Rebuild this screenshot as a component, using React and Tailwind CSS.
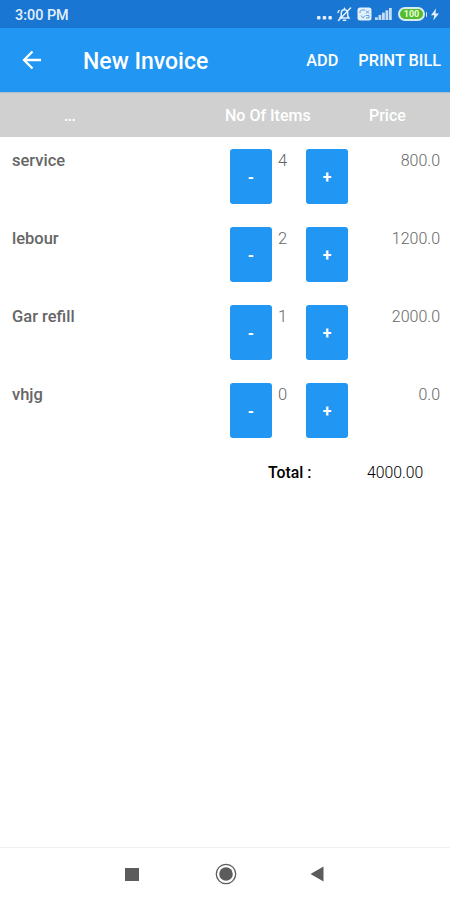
import React, { useState } from 'react';

const initialItems = [
  { id: 1, name: 'service', qty: 4, rate: 200 },
  { id: 2, name: 'lebour', qty: 2, rate: 600 },
  { id: 3, name: 'Gar refill', qty: 1, rate: 2000 },
  { id: 4, name: 'vhjg', qty: 0, rate: 100 },
];

const StatusBar = () => (
  <div className="flex h-7 items-center justify-between bg-[#1976d2] pl-[15px] pr-[11px] text-[#e3f0fc]">
    <span className="pt-[4px] text-[14.400px] leading-4 font-medium">3:00 PM</span>
    <div className="flex items-center">
      <svg className="mr-[5px] h-[14px] w-[15px]" viewBox="0 0 15 14" fill="currentColor">
        <rect x="0" y="9" width="3.500" height="3.500" rx="1" />
        <rect x="5.700" y="9" width="3.500" height="3.500" rx="1" />
        <rect x="11.400" y="9" width="3.500" height="3.500" rx="1" />
      </svg>
      {/* Muted bell */}
      <svg className="mr-[5px] h-[15px] w-[15px]" viewBox="0 0 15 15" fill="none" stroke="currentColor" strokeWidth="1.500" strokeLinecap="round">
        <path d="M3 11h9l-1.300-2V6.200C10.700 4 9.300 2.800 7.500 2.800S4.300 4 4.300 6.200V9L3 11z" />
        <path d="M6.300 13.200h2.400M7.500 1.300v1M13.500 1L1.500 13.500M1 5.500l1-2" />
      </svg>
      {/* VoLTE badge */}
      <svg className="mr-[3px] h-[14px] w-[15px]" viewBox="0 0 15 14">
        <rect x="0.500" y="0.500" width="14" height="13" rx="2.500" fill="currentColor" />
        <path d="M3 6V5c0-1.500 1-2 2.500-2H8M9 3.500l3 3M12 3.500l-3 3M4 8.500l2 2.500 2-2.500M9 8.500h3v2.500H9" fill="none" stroke="#5d9fe0" strokeWidth="1" />
      </svg>
      <svg className="mr-[6px] h-[12px] w-[17px]" viewBox="0 0 17 13" preserveAspectRatio="none" fill="currentColor">
        <rect x="0" y="10" width="2.800" height="3" opacity="0.850" />
        <rect x="3.500" y="7.500" width="2.800" height="5.500" opacity="0.850" />
        <rect x="7" y="5" width="2.800" height="8" opacity="0.850" />
        <rect x="10.500" y="2.500" width="2.800" height="10.500" opacity="0.850" />
        <rect x="14" y="0" width="2.800" height="13" opacity="0.850" />
      </svg>
      <div className="mr-[1px] flex h-[14px] w-[27px] items-center justify-center rounded-full border-2 border-[#d5edec] bg-[#55bd2c] text-[9px] leading-none font-bold text-[#eaffdf]">
        100
      </div>
      <span className="mr-[4px] h-[5px] w-[1px] rounded-r bg-[#d5edec]" />
      <svg className="h-[13px] w-[8px]" viewBox="0 0 8 13" fill="currentColor">
        <path d="M5 0.500L0 7.200h3.300L2.300 12.500 8 5.500H4.500z" />
      </svg>
    </div>
  </div>
);

const AppBar = ({ onAdd }) => (
  <div className="flex h-16 items-center bg-[#2196f3] pr-[9px] text-white">
    <button className="ml-[22px]" title="Back">
      <svg className="h-[20px] w-[20px]" viewBox="0 0 20 20" fill="none" stroke="currentColor" strokeWidth="2.300">
        <path d="M19 10H2.500M10.500 1.500L2 10l8.500 8.500" />
      </svg>
    </button>
    <h1 className="ml-[41px] pt-[4px] text-[23px] leading-7 font-medium">New Invoice</h1>
    <button className="ml-auto pt-[3px] text-[16.300px] font-medium" onClick={onAdd}>ADD</button>
    <button className="ml-[20px] pt-[3px] text-[16.300px] font-medium">PRINT BILL</button>
  </div>
);

const StepButton = ({ label, onClick }) => (
  <button
    className="flex h-[55px] w-[42px] items-center justify-center rounded-[3px] bg-[#2196f3] pt-[2px] text-[16px] font-bold text-white"
    onClick={onClick}
  >
    {label}
  </button>
);

const InvoiceRow = ({ item, onChange }) => (
  <div className="flex h-[78px] items-start pt-[12px] pr-[10px] pl-3">
    <span className="w-[218px] text-[16.500px] leading-6 font-medium text-[#666]">{item.name}</span>
    <StepButton label="-" onClick={() => onChange(item.id, -1)} />
    <span className="w-[34px] pl-[6px] text-[16.500px] leading-[23px] font-light text-[#666]">{item.qty}</span>
    <StepButton label="+" onClick={() => onChange(item.id, 1)} />
    <span className="ml-auto text-[16px] leading-[23px] font-light text-[#666]">
      {(item.qty * item.rate).toFixed(1)}
    </span>
  </div>
);

const NavBar = () => (
  <div className="flex h-[53px] items-center border-t border-[#f0f0f0] pl-[125px] text-[#5c5c5c]">
    <button className="h-[13px] w-[14px] bg-[#5c5c5c]" title="Recent apps" />
    <button className="ml-[76px]" title="Home">
      <svg className="h-[22px] w-[22px]" viewBox="0 0 22 22">
        <circle cx="11" cy="11" r="9.700" fill="none" stroke="currentColor" strokeWidth="1.300" />
        <circle cx="11" cy="11" r="6.800" fill="currentColor" />
      </svg>
    </button>
    <button className="ml-[73px]" title="Back">
      <svg className="h-[16px] w-[14px]" viewBox="0 0 14 16">
        <path d="M0.500 8L13.500 0.500v15z" fill="currentColor" />
      </svg>
    </button>
  </div>
);

const App = () => {
  const [items, setItems] = useState(initialItems);

  const handleChange = (id, step) => {
    setItems(items.map((item) => (
      item.id === id ? { ...item, qty: Math.max(0, item.qty + step) } : item
    )));
  };

  const handleAdd = () => {
    setItems([...items, { id: items.length + 1, name: 'New item', qty: 0, rate: 100 }]);
  };

  const total = items.reduce((sum, item) => sum + item.qty * item.rate, 0);

  return (
    <div className="flex h-[900px] w-[450px] flex-col overflow-hidden bg-white font-[Roboto,sans-serif]">
      <StatusBar />
      <AppBar onAdd={handleAdd} />

      {/* Table header */}
      <div className="flex h-[45px] items-center border-t border-[#aebdca] bg-[#d0d0d0] pt-[1px] text-[16px] font-medium text-white">
        <span className="w-[225px] pl-[64px] tracking-[-0.700px]">...</span>
        <span className="w-[144px]">No Of Items</span>
        <span>Price</span>
      </div>

      <div className="min-h-0 flex-1 overflow-hidden">
        {items.map((item) => (
          <InvoiceRow key={item.id} item={item} onChange={handleChange} />
        ))}
        <div className="flex pt-[12px] text-[15.800px] leading-6">
          <span className="w-[367px] pl-[268px] font-medium text-black">Total :</span>
          <span className="font-light text-black">{total.toFixed(2)}</span>
        </div>
      </div>

      <NavBar />
    </div>
  );
};

export default App;
